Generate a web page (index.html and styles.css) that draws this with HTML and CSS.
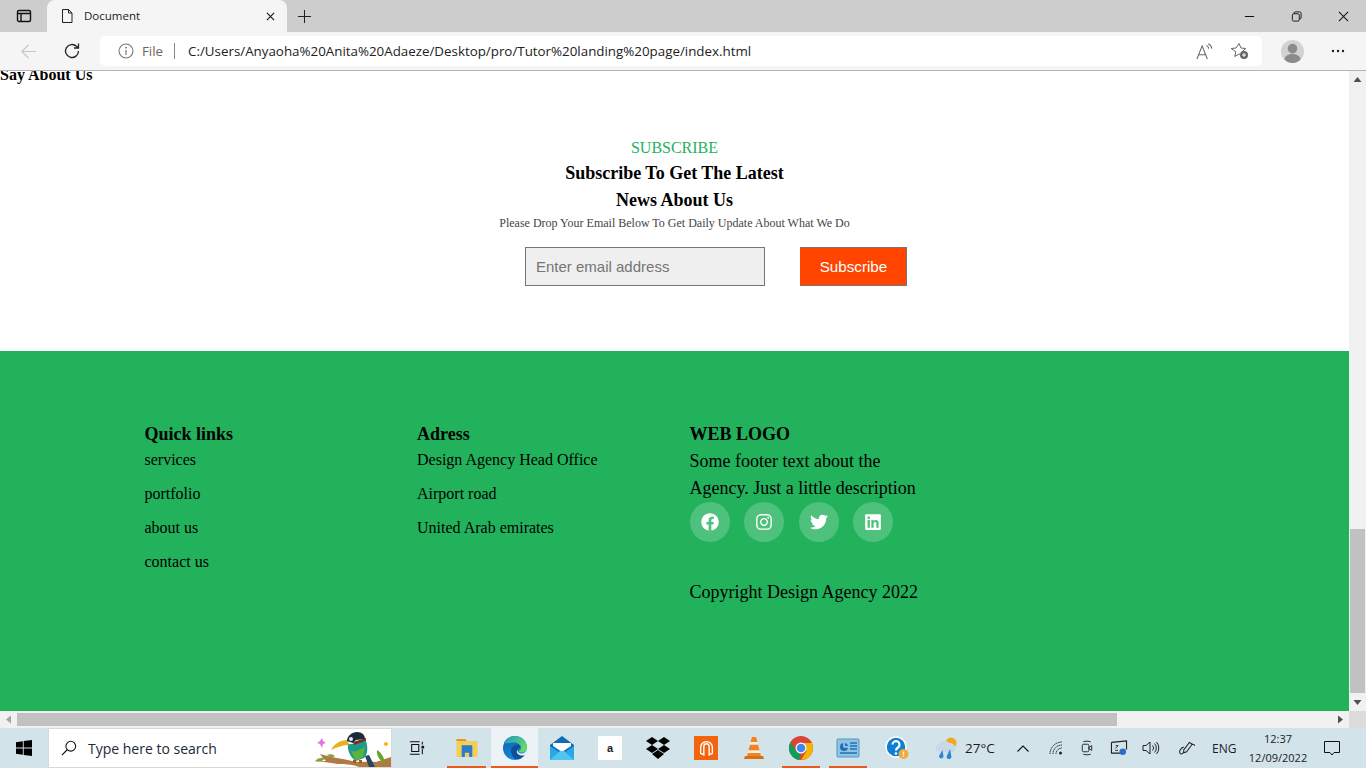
FILE: index.html
```html
<!DOCTYPE html>
<html lang="en">
<head>
<meta charset="utf-8">
<title>Document</title>
<link rel="stylesheet" href="styles.css">
</head>
<body>
<div class="screen">
  <header class="tabbar">
    <div class="tab-actions">
      <svg class="ico16" viewBox="0 0 16 16"><rect x="1.5" y="2.5" width="13" height="11" rx="1.5" fill="none" stroke="#111" stroke-width="1.4"/><path d="M1.5 5.5h13M5 5.5v8" fill="none" stroke="#111" stroke-width="1.4"/></svg>
    </div>
    <div class="tab">
      <svg class="ico16" viewBox="0 0 16 16"><path d="M3.5 1.5h6l3.5 3.5v9.500h-9.500zM9.500 1.500v3.500h3.500" fill="none" stroke="#222" stroke-width="1"/></svg>
      <span class="tab-title">Document</span>
      <svg class="tab-close" viewBox="0 0 10 10"><path d="M1 1l8 8M9 1l-8 8" stroke="#222" stroke-width="1.4"/></svg>
    </div>
    <svg class="tab-new" viewBox="0 0 16 16"><path d="M8 1v14M1 8h14" stroke="#222" stroke-width="1.1"/></svg>
    <div class="win-controls">
      <svg class="win-btn" viewBox="0 0 12 12"><path d="M1 6h10" stroke="#111" stroke-width="1.1"/></svg>
      <svg class="win-btn" viewBox="0 0 12 12"><path d="M3.500 3V2a1 1 0 0 1 1-1H9.500a1.500 1.500 0 0 1 1.500 1.500V7.500a1 1 0 0 1-1 1H9" fill="none" stroke="#111"/><rect x="1.500" y="3" width="7.500" height="8" rx="1.500" fill="none" stroke="#111"/></svg>
      <svg class="win-btn" viewBox="0 0 12 12"><path d="M1 1l10 10M11 1l-10 10" stroke="#111" stroke-width="1.1"/></svg>
    </div>
  </header>

  <div class="toolbar">
    <svg class="nav-back" viewBox="0 0 18 18"><path d="M17 9H2M9 2L2 9l7 7" fill="none" stroke="#c4c4c4" stroke-width="1.2"/></svg>
    <svg class="nav-reload" viewBox="0 0 18 18"><path d="M15.500 9a6.500 6.500 0 1 1-2-4.700L15.500 6M15.500 1.500V6H11" fill="none" stroke="#222" stroke-width="1.3"/></svg>
    <div class="address">
      <svg class="info" viewBox="0 0 16 16"><circle cx="8" cy="8" r="7" fill="none" stroke="#777" stroke-width="1.1"/><path d="M8 7v5" stroke="#777" stroke-width="1.2"/><circle cx="8" cy="4.700" r="0.900" fill="#777"/></svg>
      <span class="file-label">File</span>
      <span class="addr-sep"></span>
      <span class="url">C:/Users/Anyaoha%20Anita%20Adaeze/Desktop/pro/Tutor%20landing%20page/index.html</span>
      <svg class="read" viewBox="0 0 18 18"><path d="M1 17L6.500 3 12 17M3 12.500h7" fill="none" stroke="#666" stroke-width="1.1"/><path d="M11 2.500c1.500.8 2.300 2 2.500 3.500M13 .8c2 1 3.500 3 3.700 5.200" fill="none" stroke="#666" stroke-width="1.1"/></svg>
      <svg class="fav" viewBox="0 0 18 18"><path d="M8 1.500l2 4.500 4.800.5-3.600 3.200 1 4.800-4.200-2.500-4.200 2.500 1-4.800L.2 6.500 5 6z" fill="none" stroke="#666" stroke-width="1"/><circle cx="13" cy="13" r="4" fill="#666"/><path d="M13 11v4M11 13h4" stroke="#fff" stroke-width="1"/></svg>
    </div>
    <svg class="avatar" viewBox="0 0 24 24"><circle cx="12" cy="12" r="12" fill="#d2d2d2"/><circle cx="12" cy="9" r="5" fill="#8b8b8b"/><path d="M3.500 20c1-4 4.500-5.500 8.500-5.500s7.500 1.500 8.500 5.500c-2 2.500-5 4-8.500 4s-6.500-1.500-8.500-4z" fill="#8b8b8b"/></svg>
    <svg class="more" viewBox="0 0 14 4"><circle cx="2" cy="2" r="1.2" fill="#222"/><circle cx="7" cy="2" r="1.2" fill="#222"/><circle cx="12" cy="2" r="1.2" fill="#222"/></svg>
  </div>

  <div class="browser-view">
    <div class="view-row">
      <main class="page">
        <p class="say">Say About Us</p>
        <section class="subscribe">
          <p class="sub-eyebrow">SUBSCRIBE</p>
          <h3 class="sub-title">Subscribe To Get The Latest<br>News About Us</h3>
          <p class="sub-note">Please Drop Your Email Below To Get Daily Update About What We Do</p>
          <form class="sub-form">
            <input class="sub-input" type="email" placeholder="Enter email address">
            <button class="sub-button" type="button">Subscribe</button>
          </form>
        </section>
        <footer class="footer">
          <div class="foot-col">
            <h3 class="foot-head">Quick links</h3>
            <p class="foot-link">services</p>
            <p class="foot-link">portfolio</p>
            <p class="foot-link">about us</p>
            <p class="foot-link">contact us</p>
          </div>
          <div class="foot-col">
            <h3 class="foot-head">Adress</h3>
            <p class="foot-link">Design Agency Head Office</p>
            <p class="foot-link">Airport road</p>
            <p class="foot-link">United Arab emirates</p>
          </div>
          <div class="foot-col foot-wide">
            <h3 class="foot-head">WEB LOGO</h3>
            <p class="foot-text">Some footer text about the<br>Agency. Just a little description</p>
            <div class="socials">
              <span class="social"><svg class="social-ico" viewBox="0 0 512 512"><path d="M504 256C504 119 393 8 256 8S8 119 8 256c0 123.780 90.690 226.380 209.250 245V327.690h-63V256h63v-54.640c0-62.150 37-96.480 93.670-96.480 27.140 0 55.520 4.840 55.520 4.840v61h-31.280c-30.800 0-40.410 19.120-40.410 38.730V256h68.780l-11 71.690h-57.780V501C413.310 482.380 504 379.780 504 256z"/></svg></span>
              <span class="social"><svg class="social-ico" viewBox="0 0 448 512"><path d="M224.100 141c-63.600 0-114.900 51.300-114.900 114.900s51.300 114.900 114.900 114.900S339 319.500 339 255.900 287.700 141 224.100 141zm0 189.600c-41.100 0-74.700-33.500-74.700-74.700s33.500-74.700 74.700-74.700 74.700 33.500 74.700 74.700-33.600 74.700-74.700 74.700zm146.400-194.300c0 14.900-12 26.800-26.800 26.800-14.900 0-26.800-12-26.800-26.800s12-26.800 26.800-26.800 26.800 12 26.800 26.800zm76.100 27.200c-1.700-35.900-9.900-67.700-36.200-93.900-26.200-26.200-58-34.400-93.900-36.200-37-2.100-147.900-2.100-184.900 0-35.800 1.700-67.600 9.900-93.900 36.100s-34.400 58-36.200 93.900c-2.100 37-2.100 147.900 0 184.900 1.700 35.900 9.900 67.700 36.200 93.900s58 34.400 93.900 36.200c37 2.100 147.900 2.100 184.900 0 35.900-1.700 67.700-9.900 93.900-36.200 26.200-26.200 34.400-58 36.200-93.900 2.100-37 2.100-147.800 0-184.800zM398.800 388c-7.800 19.600-22.900 34.700-42.600 42.600-29.500 11.700-99.500 9-132.100 9s-102.700 2.600-132.100-9c-19.600-7.800-34.700-22.900-42.600-42.600-11.700-29.500-9-99.500-9-132.100s-2.600-102.700 9-132.100c7.800-19.600 22.900-34.700 42.600-42.600 29.500-11.700 99.500-9 132.100-9s102.700-2.600 132.100 9c19.600 7.800 34.700 22.900 42.600 42.600 11.700 29.500 9 99.500 9 132.100s2.700 102.700-9 132.100z"/></svg></span>
              <span class="social"><svg class="social-ico" viewBox="0 0 512 512"><path d="M459.370 151.716c.325 4.548.325 9.097.325 13.645 0 138.720-105.583 298.558-298.558 298.558-59.452 0-114.680-17.219-161.137-47.106 8.447.974 16.568 1.299 25.340 1.299 49.055 0 94.213-16.568 130.274-44.832-46.132-.975-84.792-31.188-98.112-72.772 6.498.974 12.995 1.624 19.818 1.624 9.421 0 18.843-1.300 27.614-3.573-48.081-9.747-84.143-51.980-84.143-102.985v-1.299c13.969 7.797 30.214 12.670 47.431 13.319-28.264-18.843-46.781-51.005-46.781-87.391 0-19.492 5.197-37.360 14.294-52.954 51.655 63.675 129.300 105.258 216.365 109.807-1.624-7.797-2.599-15.918-2.599-24.040 0-57.828 46.782-104.934 104.934-104.934 30.213 0 57.502 12.670 76.670 33.137 23.715-4.548 46.456-13.320 66.599-25.340-7.798 24.366-24.366 44.833-46.132 57.827 21.117-2.273 41.584-8.122 60.426-16.243-14.292 20.791-32.161 39.308-52.628 54.253z"/></svg></span>
              <span class="social"><svg class="social-ico" viewBox="0 0 448 512"><path d="M416 32H31.900C14.300 32 0 46.500 0 64.300v383.400C0 465.500 14.300 480 31.900 480H416c17.600 0 32-14.500 32-32.300V64.300c0-17.800-14.400-32.300-32-32.300zM135.400 416H69V202.200h66.500V416zm-33.200-243c-21.300 0-38.500-17.300-38.500-38.500S80.900 96 102.200 96c21.200 0 38.500 17.300 38.500 38.500 0 21.300-17.200 38.500-38.500 38.500zm282.100 243h-66.400V312c0-24.800-.5-56.700-34.500-56.700-34.600 0-39.900 27-39.900 54.900V416h-66.400V202.200h63.700v29.200h.9c8.900-16.800 30.600-34.500 62.900-34.500 67.200 0 79.700 44.300 79.700 101.900V416z"/></svg></span>
            </div>
            <p class="foot-copy">Copyright Design Agency 2022</p>
          </div>
        </footer>
      </main>
      <div class="vscroll">
        <svg class="arrow" viewBox="0 0 8 5"><path d="M4 0l4 5H0z"/></svg>
        <div class="vtrack"><div class="vthumb"></div></div>
        <svg class="arrow" viewBox="0 0 8 5"><path d="M0 0h8L4 5z"/></svg>
      </div>
    </div>
    <div class="hscroll">
      <svg class="harrow harrow-off" viewBox="0 0 5 8"><path d="M5 0v8L0 4z"/></svg>
      <div class="htrack"><div class="hthumb"></div></div>
      <svg class="harrow" viewBox="0 0 5 8"><path d="M0 0v8l5-4z"/></svg>
      <div class="corner"></div>
    </div>
  </div>

  <div class="taskbar">
    <div class="start">
      <svg class="win-logo" viewBox="0 0 16 16"><path d="M0 2.200L6.800 1.200V7.600H0zM7.700 1.100L16 0V7.600H7.700zM0 8.400H6.800V14.800L0 13.800zM7.700 8.400H16V16L7.700 14.900z" fill="#000"/></svg>
    </div>
    <div class="search">
      <svg class="search-ico" viewBox="0 0 18 18"><circle cx="11" cy="7" r="5.500" fill="none" stroke="#111" stroke-width="1.2"/><path d="M7 11l-6 6" stroke="#111" stroke-width="1.3"/></svg>
      <span class="search-text">Type here to search</span>
      <svg class="bird" viewBox="0 0 82 38">
        <path d="M11 25c6 2 12 3 17 4 6 1 11 2 15 3 9 2 17 0 24 1l15-5v10H50c-8-3-14-3-21-3-7-1-13-2-21-3l9 0c-2-2-4-4-6-7z" fill="#b07a45"/>
        <path d="M6 32c2-3 7-4 10-3-2 3-6 5-10 3zM18 26c2-1 6-1 8 1-2 2-6 2-8-1z" fill="#7da83a"/>
        <path d="M68 21c4 2 7 7 8 13-4-1-9-7-8-13z" fill="#6aa32e"/>
        <path d="M22 21c3-6 9-10 17-10l1 5c-6 0-12 2-18 5z" fill="#e8b21c"/>
        <path d="M39 15c3 1 12-2 18-3 2 6 2 13-2 17l-8 3c-5-3-9-10-8-17z" fill="#1d9a8a"/>
        <path d="M38 12c0-5 5-9 10-9 5 0 8 3 8 7l-9 1-3 3z" fill="#1c2b3a"/>
        <path d="M44 13c4-1 9-3 13-4v3c-4 1-9 3-12 4z" fill="#7c2c2b"/>
        <circle cx="42" cy="10" r="2" fill="#dfe9ee"/>
        <path d="M42 22c5 1 10-1 14-5l-2 11-7 4z" fill="#5cb43c"/>
        <path d="M44 31h3v3h-3zM50 31h3v3h-3z" fill="#a8552a"/>
        <path d="M56 27l4-1 6 12h-6z" fill="#2a4558"/>
        <path d="M11 12l2-3 1 3 3 2-3 1-1 4-2-4-3-1z" fill="#dd77e6"/>
        <circle cx="77" cy="15" r="2" fill="#f7b516"/>
      </svg>
    </div>
    <div class="cell cell-view">
      <svg class="ti" viewBox="0 0 18 16"><path d="M1 1h11M1 15h11M3 4h8v8H3zM15 1v3M15 9v6" fill="none" stroke="#111" stroke-width="1.2"/><rect x="14" y="5.500" width="3" height="3" fill="#111"/></svg>
    </div>
    <div class="cell cell-under cell-folder">
      <svg class="ti-folder" viewBox="1 3 20 17"><path d="M1 3h8l2 2h10v15H1z" fill="#f6cd5a"/><path d="M1 3h8l2 2H1z" fill="#d89c22"/><path d="M6 9h10v11h-3v-4H9v4H6z" fill="#2a7ec9"/></svg>
    </div>
    <div class="cell cell-under cell-edge">
      <svg class="ti-l" viewBox="0 0 24 24">
        <defs>
          <linearGradient id="edgeBlue" x1="0" y1="0" x2="0.4" y2="1"><stop offset="0" stop-color="#0f5fb0"/><stop offset="1" stop-color="#1487d8"/></linearGradient>
          <linearGradient id="edgeGreen" x1="0" y1="0" x2="1" y2="0.6"><stop offset="0" stop-color="#1f95cf"/><stop offset="1" stop-color="#62dd62"/></linearGradient>
        </defs>
        <circle cx="12" cy="12" r="12" fill="url(#edgeBlue)"/>
        <path d="M1 7C3 2.500 7 0 12 0c7 0 12 5 12 12 0 2.500-2.500 4.500-5.500 4.500-1.500 0-2.500-.3-3.200-1 1.700-.8 2.700-2 2.700-3.500 0-3-3-5.500-6.500-5.500C7 6.500 3.500 8 1 7z" fill="url(#edgeGreen)"/>
        <path d="M8 15c0-4 3-6 6-6.500 1.500 0 3 .7 3.500 1.700 0 1.500-1.500 2.500-3 3-1.500 2 0 4 2.500 5 2 .8 3.500.5 4.500 0 .6-.2-1.500 3-4.500 4.500-2 .5-4 .3-5.500-.2C9.500 21 8 18 8 15z" fill="#0d4f9a"/>
        <path d="M24 12.500c-.5 3-3 5-5.500 5-2.500 0-4-1.200-4.300-3.500-1.200 2 .2 4.500 2.800 5.200 2.500.8 4.500.3 5.500-.7 1-2 1.500-4 1.500-6z" fill="#ecf2f5"/>
      </svg>
    </div>
    <div class="cell">
      <svg class="ti-l" viewBox="0 0 24 24"><path d="M0 9L12 0l12 9v15H0z" fill="#0f6cb6"/><path d="M0 10l12 8 12-8v14H0z" fill="#29a8e8"/><path d="M3 7h18v3l-9 6-9-6z" fill="#fff"/><path d="M0 24l10-9h4l10 9z" fill="#51c4f0"/></svg>
    </div>
    <div class="cell">
      <span class="amazon">a</span>
    </div>
    <div class="cell">
      <svg class="ti-l" viewBox="0 0 24 22"><path d="M6 0l6 4-6 4-6-4zM18 0l6 4-6 4-6-4zM6 8l6 4-6 4-6-4zM18 8l6 4-6 4-6-4zM12 13l6 4-6 5-6-5z" fill="#000"/></svg>
    </div>
    <div class="cell">
      <span class="office"><svg class="office-ico" viewBox="0 0 16 16"><path d="M2.500 12.500V7a5.500 5.500 0 0 1 11 0v5.500l-3 1.500V6a2.500 2.500 0 0 0-5 0v8z" fill="none" stroke="#fff" stroke-width="1.3"/></svg></span>
    </div>
    <div class="cell cell-vlc">
      <svg class="ti-l" viewBox="0 0 20 24"><path d="M8 1h4l1.500 5h-7zM6 8.500h8l1.500 6h-11zM4 17h12l1 3H3z" fill="#f58220"/><path d="M6.500 6h7l.5 2.500H6zM4.500 14.500h11l.5 2.500H4z" fill="#f5f0e0"/><path d="M1 20h18l1 3H0z" fill="#d86f12"/></svg>
    </div>
    <div class="cell cell-under cell-chrome">
      <svg class="ti-l" viewBox="0 0 24 24"><circle cx="12" cy="12" r="12" fill="#db4437"/><path d="M12 24a12 12 0 0 1-10.400-18L7 15l5 2 0 0-2 7z" fill="#0f9d58"/><path d="M12 7h10.900A12 12 0 0 1 12 24l5.500-9z" fill="#f4b400"/><circle cx="12" cy="12" r="5.500" fill="#fff"/><circle cx="12" cy="12" r="4.300" fill="#4285f4"/></svg>
    </div>
    <div class="cell cell-under cell-last">
      <svg class="ti-l" viewBox="0 0 24 20"><rect x="1" y="1" width="22" height="18" rx="1" fill="#8cc4e8" stroke="#5a93ba"/><circle cx="8" cy="9" r="4" fill="#1f6fb3"/><path d="M8 5v4h4" fill="none" stroke="#fff"/><path d="M14 5h7M14 8h7M14 11h7M4 15h17" stroke="#1f6fb3" stroke-width="1.5"/></svg>
    </div>
    <div class="tray">
      <svg class="tray-help" viewBox="0 0 24 24"><circle cx="11" cy="11" r="10" fill="#0e7fd1" stroke="#fff" stroke-width="1.5"/><path d="M7.500 8.500a3.500 3.500 0 1 1 5.500 3c-1.500 1-2 1.500-2 3" fill="none" stroke="#fff" stroke-width="2.2"/><circle cx="11" cy="17.500" r="1.300" fill="#fff"/><circle cx="18.500" cy="18" r="5" fill="#f2a93b"/><path d="M18.500 15.500v3M18.500 19.500v1.200" stroke="#fff" stroke-width="1.4"/></svg>
      <svg class="tray-weather" viewBox="0 0 22 22"><circle cx="15" cy="6" r="5.500" fill="#f5a623"/><path d="M2.500 15a4.500 4.500 0 0 1 1-8.500c1.500-3 7-4 9.500-.5 4-.5 7 3 6.500 6-.3 2-1.500 3.500-2.500 3.500z" fill="#c7d8e6"/><path d="M6.500 13L3.500 18a2.200 2.200 0 1 0 4 1.200zM14 12l-3 6.500a2.400 2.400 0 1 0 4.400 1z" fill="#2f86d6"/></svg>
      <span class="tray-temp">27°C</span>
      <svg class="tray-chev" viewBox="0 0 12 7"><path d="M.5 6.500L6 1l5.500 5.500" fill="none" stroke="#111" stroke-width="1.1"/></svg>
      <svg class="tray-wifi" viewBox="0 0 14 14"><path d="M1 13A12 12 0 0 1 13 1M4 13a9 9 0 0 1 9-9M7 13a6 6 0 0 1 6-6" fill="none" stroke="#222" stroke-dasharray="1.500 .6" stroke-width="1"/><circle cx="11.500" cy="12" r="1.500" fill="#222"/></svg>
      <svg class="tray-cam" viewBox="0 0 12 17"><path d="M2 2c2-1 6-1 8 0M2 15c2 1 6 1 8 0" fill="none" stroke="#222"/><rect x="1" y="4.500" width="7" height="8" rx="1.500" fill="none" stroke="#222"/><path d="M8 8l3-2v5l-3-2z" fill="none" stroke="#222"/></svg>
      <svg class="tray-screen" viewBox="0 0 18 17"><path d="M1 2.500L17 1v9M11 14H1V2.500" fill="none" stroke="#222" stroke-width="1.2"/><path d="M5 9l3-3M8 6H5.500M5 11h3" fill="none" stroke="#222"/><circle cx="13" cy="12.500" r="3.500" fill="#2c6cc4"/></svg>
      <svg class="tray-sound" viewBox="0 0 18 14"><path d="M1 4.500h3L8 1v12L4 9.500H1z" fill="none" stroke="#222"/><path d="M10.500 4.500a3.500 3.500 0 0 1 0 5M12.500 2.500a6.500 6.500 0 0 1 0 9M14.500 1a9 9 0 0 1 0 12" fill="none" stroke="#222"/></svg>
      <svg class="tray-pen" viewBox="0 0 18 16"><path d="M5 10l6-8 3 2-6 8-3 1z" fill="none" stroke="#222" stroke-width="1.1"/><path d="M5 7C2 8 0 11 1 13.500c1 1.500 3 .5 4-1M13.500 4c1.500 0 3 .5 3 1.500" fill="none" stroke="#222" stroke-width="1.1"/></svg>
      <span class="tray-lang">ENG</span>
      <div class="tray-clock"><span>12:37</span><span>12/09/2022</span></div>
      <svg class="tray-note" viewBox="0 0 16 15"><path d="M.5.500h15v11H10L8 14l-2-2.500H.5z" fill="none" stroke="#111" stroke-width="1"/></svg>
    </div>
  </div>
</div>
</body>
</html>
```

FILE: styles.css
```css
html, body { margin: 0; padding: 0; height: 100%; overflow: hidden; }
.screen { width: 1366px; height: 768px; display: flex; flex-direction: column; background: #fff; font-family: "Liberation Serif", serif; }
svg { display: block; flex: none; }

.tabbar { height: 32px; flex: none; display: flex; align-items: center; background: #cdcdcd; }
.tab-actions { width: 47px; display: flex; justify-content: center; }
.ico16 { width: 16px; height: 16px; }
.tab { box-sizing: border-box; width: 240px; height: 32px; display: flex; align-items: center; padding: 0 12px; background: #f5f5f5; border-radius: 8px 8px 0 0; }
.tab-title { margin-left: 9px; padding-bottom: 2px; font: 11.5px "Open Sans", sans-serif; color: #222; flex: 1; }
.tab-close { width: 9px; height: 9px; }
.tab-new { width: 15px; height: 15px; margin-left: 10px; }
.win-controls { margin-left: auto; display: flex; align-items: center; gap: 36px; padding-right: 17px; }
.win-btn { width: 11px; height: 11px; }

.toolbar { height: 38px; flex: none; display: flex; align-items: center; background: #f5f5f5; border-bottom: 1px solid #b4b4b4; }
.nav-back { width: 17px; height: 17px; margin-left: 20px; }
.nav-reload { width: 18px; height: 18px; margin-left: 26px; }
.address { width: 1162px; height: 30px; margin-left: 19px; display: flex; align-items: center; background: #fff; border-radius: 5px; }
.info { width: 16px; height: 16px; margin-left: 18px; }
.file-label { margin-left: 8px; font: 13.3px "Open Sans", sans-serif; color: #666; }
.addr-sep { width: 1px; height: 16px; margin-left: 11px; background: #888; }
.url { margin-left: 13px; font: 13.35px "Open Sans", sans-serif; color: #222; flex: 1; white-space: nowrap; }
.read { width: 17px; height: 17px; margin-right: 18px; }
.fav { width: 18px; height: 18px; margin-right: 13px; }
.avatar { width: 23px; height: 23px; margin-left: 19px; }
.more { width: 14px; height: 4px; margin-left: 27px; }

.browser-view { height: 657px; flex: none; display: flex; flex-direction: column; overflow: hidden; }
.view-row { height: 640px; flex: none; display: flex; }
.page { width: 1349px; height: 640px; flex: none; overflow: hidden; }
.say { margin: -5px 0 0; font-weight: 700; font-size: 16px; line-height: 18px; color: #000; }

.subscribe { height: 267px; box-sizing: border-box; padding-top: 55px; display: flex; flex-direction: column; align-items: center; }
.sub-eyebrow { margin: 0; font-size: 16px; line-height: 18px; color: #22b25c; }
.sub-title { margin: 3px 0 0; font-size: 18px; line-height: 27px; font-weight: 700; text-align: center; color: #000; }
.sub-note { margin: 2px 0 0; font-size: 12px; line-height: 14px; color: #444; }
.sub-form { margin: 17px 0 0 83px; display: flex; gap: 35px; }
.sub-input { box-sizing: border-box; width: 240px; height: 39px; padding: 0 10px; border: 1px solid #767676; background: #efefef; font: 15px "Liberation Sans", sans-serif; }
.sub-input::placeholder { color: #757575; opacity: 1; }
.sub-button { box-sizing: border-box; width: 107px; height: 39px; border: 1px solid #767676; border-left-color: #ff4500; background: #ff4500; color: #fff; font: 15.2px "Liberation Sans", sans-serif; padding: 0; }

.footer { height: 360px; box-sizing: border-box; padding: 72px 0 0 144.5px; background: #22b25c; display: flex; color: #000; }
.foot-col { width: 272.5px; flex: none; }
.foot-wide { width: 300px; }
.foot-head { margin: 0; font-size: 18px; line-height: 22px; font-weight: 700; }
.foot-link { margin: 0 0 16px; font-size: 16px; line-height: 18px; }
.foot-head + .foot-link { margin-top: 6px; }
.foot-text { margin: 3px 0 0; font-size: 18px; line-height: 27px; }
.socials { display: flex; gap: 14.5px; }
.social { width: 40px; height: 40px; border-radius: 50%; background: rgba(255,255,255,.2); display: flex; align-items: center; justify-content: center; }
.social-ico { width: 18px; height: 18px; fill: #fff; }
.foot-copy { margin: 39px 0 0; font-size: 18px; line-height: 22px; }

.vscroll { width: 17px; flex: none; display: flex; flex-direction: column; align-items: center; background: #f1f1f1; }
.arrow { width: 9px; height: 5px; margin: 6px 0; fill: #505050; }
.vtrack { flex: 1; align-self: stretch; display: flex; flex-direction: column; justify-content: flex-end; }
.vthumb { height: 164px; background: #c1c1c1; margin: 0 1px 1px; }

.hscroll { height: 17px; flex: none; display: flex; align-items: center; background: #f1f1f1; }
.harrow { width: 5px; height: 9px; margin: 0 6px; fill: #505050; }
.harrow-off { fill: #a3a3a3; }
.htrack { flex: 1; height: 13px; }
.hthumb { width: 1100px; height: 13px; background: #c1c1c1; }
.corner { width: 17px; height: 17px; background: #dcdcdc; }

.taskbar { height: 40px; flex: none; display: flex; align-items: center; background: #d3e3ea; }
.start { width: 48px; display: flex; justify-content: center; }
.win-logo { width: 16px; height: 16px; }
.search { box-sizing: border-box; width: 344px; height: 40px; display: flex; align-items: center; background: #fff; border: 1px solid #d8d8d8; overflow: hidden; }
.search-ico { width: 16px; height: 16px; margin-left: 12px; }
.search-text { margin-left: 11px; font: 14px "Open Sans", sans-serif; color: #1c2a3a; flex: 1; }
.bird { width: 82px; height: 38px; }
.cell { box-sizing: border-box; width: 48px; height: 40px; flex: none; display: flex; align-items: center; justify-content: center; }
.cell-view { width: 49px; }
.cell-under { border-bottom: 2px solid #e95b1c; padding-top: 2px; background-clip: padding-box; }
.cell-folder { width: 39px; margin: 0 5px 0 6px; }
.cell-edge { width: 47px; background: #ecf2f5; }
.cell-vlc { width: 47px; }
.cell-chrome { width: 38px; margin: 0 4px 0 5px; }
.cell-last { width: 38px; margin-left: 5px; }
.ti { width: 16px; height: 16px; }
.ti-l { width: 24px; height: 24px; }
.ti-folder { width: 22px; height: 18px; }
.amazon { width: 24px; height: 24px; background: #fff; display: flex; align-items: center; justify-content: center; font: 700 11px "Liberation Sans", sans-serif; color: #222; }
.office { width: 24px; height: 24px; background: #f3640f; display: flex; align-items: center; justify-content: center; }
.office-ico { width: 17px; height: 17px; }

.tray { flex: 1; height: 40px; display: flex; align-items: center; font-family: "Open Sans", sans-serif; color: #1c1c1c; }
.tray-help { width: 24px; height: 24px; margin-left: 18px; }
.tray-weather { width: 22px; height: 22px; margin-left: 27px; }
.tray-temp { margin-left: 7px; width: 36px; font-size: 13.5px; }
.tray-chev { width: 12px; height: 7px; margin-left: 16px; }
.tray-wifi { width: 14px; height: 14px; margin-left: 20px; }
.tray-cam { width: 12px; height: 16px; margin-left: 18px; }
.tray-screen { width: 18px; height: 16px; margin-left: 17px; }
.tray-sound { width: 18px; height: 14px; margin-left: 14px; }
.tray-pen { width: 17px; height: 16px; margin-left: 19px; }
.tray-lang { margin-left: 16px; font-size: 12px; width: 30px; }
.tray-clock { width: 62px; margin-left: 5px; display: flex; flex-direction: column; align-items: center; font-size: 11px; line-height: 19px; }
.tray-note { width: 16px; height: 15px; margin-left: 15px; }
```
